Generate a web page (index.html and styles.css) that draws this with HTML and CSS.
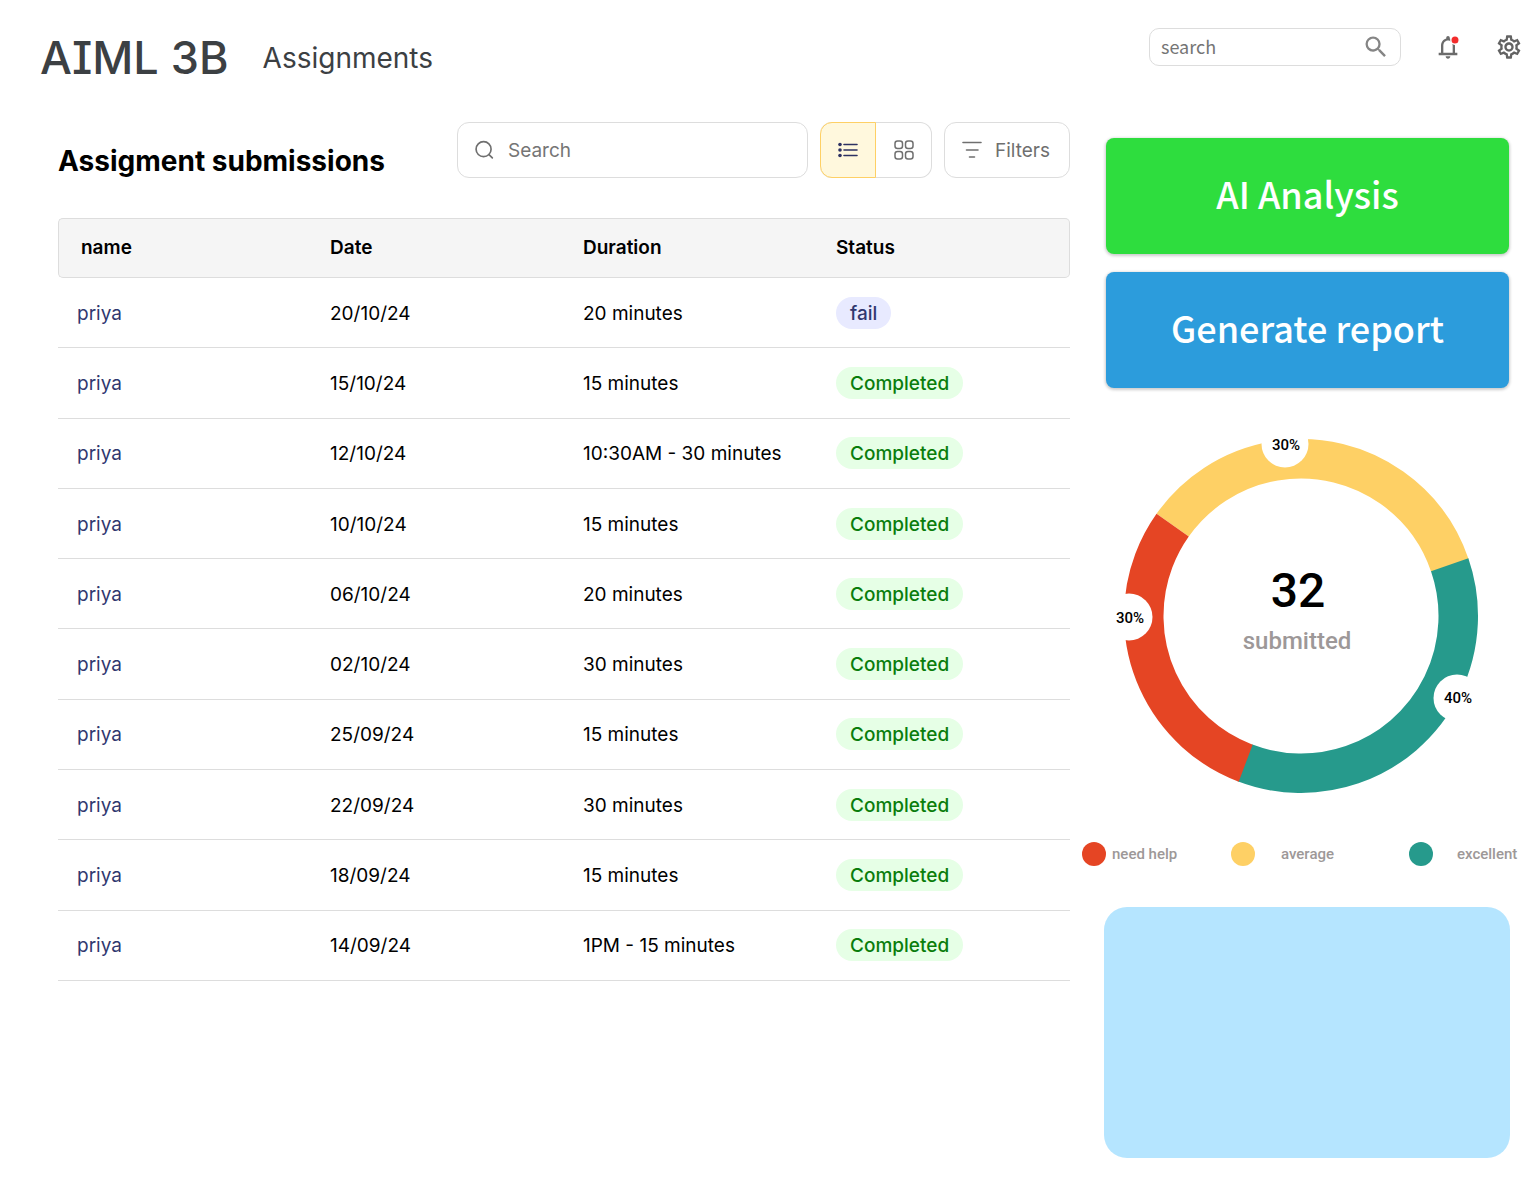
FILE: index.html
```html
<!DOCTYPE html>
<html lang="en">
<head>
<meta charset="utf-8">
<meta name="viewport" content="width=device-width, initial-scale=1">
<title>AIML 3B – Assignments</title>
<link rel="stylesheet" href="styles.css">
</head>
<body>
<header class="topbar">
  <h1 class="class-name">AIML 3B</h1>
  <p class="section-name">Assignments</p>
  <div class="top-actions">
    <label class="top-search">
      <input type="search" placeholder="search" aria-label="Search the site">
      <svg class="icon-lg" viewBox="0 0 24 24" fill="#858585" aria-hidden="true"><path d="M15.500 14h-.79l-.28-.27A6.471 6.471 0 0 0 16 9.500 6.500 6.500 0 1 0 9.500 16c1.610 0 3.090-.59 4.230-1.570l.27.28v.79l5 4.990L20.490 19l-4.990-5zm-6 0C7.010 14 5 11.990 5 9.500S7.010 5 9.500 5 14 7.010 14 9.500 11.990 14 9.500 14z"/></svg>
    </label>
    <button class="icon-button" type="button" aria-label="Notifications">
      <svg class="icon-lg" viewBox="0 0 24 24" aria-hidden="true"><path fill="#6b6b6b" d="M12 22c1.100 0 2-.9 2-2h-4c0 1.100.9 2 2 2zm6-5v-6c0-3.070-1.630-5.640-4.500-6.320V4c0-.83-.67-1.500-1.500-1.500s-1.500.67-1.500 1.500v.68C7.640 5.360 6 7.920 6 11v6H4v2h16v-2h-2zm-2 0H8v-6c0-2.480 1.510-4.500 4-4.500s4 2.020 4 4.500v6z"/><circle cx="18" cy="6" r="3.600" fill="#f32c2c" stroke="#fff" stroke-width="1.200"/></svg>
    </button>
    <button class="icon-button" type="button" aria-label="Settings">
      <svg class="icon-lg" viewBox="0 0 24 24" fill="#636363" aria-hidden="true"><path d="M19.430 12.980c.04-.32.07-.64.07-.98 0-.34-.03-.66-.07-.98l2.110-1.650c.19-.15.24-.42.12-.64l-2-3.460c-.09-.16-.26-.25-.44-.25-.06 0-.12.010-.17.030l-2.490 1c-.52-.4-1.080-.73-1.690-.98l-.38-2.650C14.460 2.180 14.250 2 14 2h-4c-.25 0-.46.18-.49.42l-.38 2.650c-.61.25-1.170.59-1.690.98l-2.490-1c-.06-.02-.12-.03-.18-.03-.17 0-.34.09-.43.25l-2 3.460c-.13.22-.07.49.12.64l2.110 1.650c-.04.32-.07.65-.07.98 0 .33.030.66.070.98l-2.110 1.650c-.19.15-.24.42-.12.64l2 3.460c.09.16.26.25.44.25.06 0 .12-.01.17-.03l2.490-1c.52.4 1.080.73 1.690.98l.38 2.650c.03.24.24.42.49.42h4c.25 0 .46-.18.49-.42l.38-2.650c.61-.25 1.170-.59 1.690-.98l2.490 1c.06.020.12.030.18.030.17 0 .34-.09.43-.25l2-3.460c.12-.22.07-.49-.12-.64l-2.110-1.650zm-1.980-1.710c.04.31.05.52.05.73 0 .21-.02.43-.05.73l-.14 1.130.89.7 1.080.84-.7 1.210-1.270-.51-1.040-.42-.9.68c-.43.32-.84.56-1.250.73l-1.060.43-.16 1.130-.2 1.350h-1.400l-.19-1.350-.16-1.130-1.060-.43c-.43-.18-.83-.41-1.230-.71l-.91-.7-1.060.43-1.270.51-.7-1.210 1.080-.84.89-.7-.14-1.130c-.03-.31-.05-.54-.05-.74s.02-.43.05-.73l.14-1.130-.89-.7-1.080-.84.7-1.210 1.270.51 1.040.42.9-.68c.43-.32.84-.56 1.250-.73l1.060-.43.16-1.130.2-1.350h1.390l.19 1.350.16 1.130 1.060.43c.43.18.83.41 1.230.71l.91.7 1.060-.43 1.270-.51.7 1.210-1.070.85-.89.7.14 1.130zM12 8c-2.210 0-4 1.790-4 4s1.790 4 4 4 4-1.790 4-4-1.790-4-4-4zm0 6c-1.100 0-2-.9-2-2s.9-2 2-2 2 .9 2 2-.9 2-2 2z"/></svg>
    </button>
  </div>
</header>

<main class="layout">
  <section class="submissions">
    <div class="toolbar">
      <h2 class="toolbar-title">Assigment submissions</h2>
      <label class="table-search">
        <svg class="icon" viewBox="0 0 24 24" fill="none" stroke="#6f6f6f" stroke-width="2" stroke-linecap="round" aria-hidden="true"><circle cx="11.500" cy="11" r="9"/><path d="M18 17.500l4 4"/></svg>
        <input type="search" placeholder="Search" aria-label="Search submissions">
      </label>
      <div class="view-toggle">
        <button class="view-button is-active" type="button" aria-label="List view" aria-pressed="true">
          <svg class="icon" viewBox="0 0 20 20" fill="none" stroke="#2d3162" stroke-width="1.600" stroke-linecap="round" aria-hidden="true"><path d="M6 4.500h13M6 10h13M6 15.500h13"/><g fill="#2d3162" stroke="none"><circle cx="2" cy="4.500" r="1.800"/><circle cx="2" cy="10" r="1.800"/><circle cx="2" cy="15.500" r="1.800"/></g></svg>
        </button>
        <button class="view-button" type="button" aria-label="Grid view" aria-pressed="false">
          <svg class="icon" viewBox="0 0 20 20" fill="none" stroke="#6f6f6f" stroke-width="1.500" aria-hidden="true"><rect x="1" y="1" width="7.500" height="7.500" rx="2.500"/><rect x="11.500" y="1" width="7.500" height="7.500" rx="2.500"/><rect x="1" y="11.500" width="7.500" height="7.500" rx="2.500"/><rect x="11.500" y="11.500" width="7.500" height="7.500" rx="2.500"/></svg>
        </button>
      </div>
      <button class="filter-button" type="button">
        <svg class="icon" viewBox="0 0 20 20" fill="none" stroke="#6f6f6f" stroke-width="1.600" stroke-linecap="round" aria-hidden="true"><path d="M1 2.500h18M4.500 10h11.500M7.500 17h5"/></svg>
        <span>Filters</span>
      </button>
    </div>

    <table class="submission-table">
      <thead>
        <tr><th scope="col">name</th><th scope="col">Date</th><th scope="col">Duration</th><th scope="col">Status</th></tr>
      </thead>
      <tbody>
        <tr><td><a href="#">priya</a></td><td>20/10/24</td><td>20 minutes</td><td><span class="status status-fail">fail</span></td></tr>
        <tr><td><a href="#">priya</a></td><td>15/10/24</td><td>15 minutes</td><td><span class="status">Completed</span></td></tr>
        <tr><td><a href="#">priya</a></td><td>12/10/24</td><td>10:30AM - 30 minutes</td><td><span class="status">Completed</span></td></tr>
        <tr><td><a href="#">priya</a></td><td>10/10/24</td><td>15 minutes</td><td><span class="status">Completed</span></td></tr>
        <tr><td><a href="#">priya</a></td><td>06/10/24</td><td>20 minutes</td><td><span class="status">Completed</span></td></tr>
        <tr><td><a href="#">priya</a></td><td>02/10/24</td><td>30 minutes</td><td><span class="status">Completed</span></td></tr>
        <tr><td><a href="#">priya</a></td><td>25/09/24</td><td>15 minutes</td><td><span class="status">Completed</span></td></tr>
        <tr><td><a href="#">priya</a></td><td>22/09/24</td><td>30 minutes</td><td><span class="status">Completed</span></td></tr>
        <tr><td><a href="#">priya</a></td><td>18/09/24</td><td>15 minutes</td><td><span class="status">Completed</span></td></tr>
        <tr><td><a href="#">priya</a></td><td>14/09/24</td><td>1PM - 15 minutes</td><td><span class="status">Completed</span></td></tr>
      </tbody>
    </table>
  </section>

  <aside class="sidebar">
    <div class="actions">
      <button class="action action-analysis" type="button">AI Analysis</button>
      <button class="action action-report" type="button">Generate report</button>
    </div>

    <svg class="donut" viewBox="0 0 436 372" role="img" aria-label="32 submitted: 30% need help, 30% average, 40% excellent">
      <g fill="none" stroke-width="39.500">
        <circle cx="219" cy="184" r="157.250" pathLength="360" stroke="#fed065" stroke-dasharray="126 234" transform="rotate(-144.700 219 184)"/>
        <circle cx="219" cy="184" r="157.250" pathLength="360" stroke="#269a8c" stroke-dasharray="130 230" transform="rotate(-19 219 184)"/>
        <circle cx="219" cy="184" r="157.250" pathLength="360" stroke="#e54524" stroke-dasharray="104.700 255.300" transform="rotate(110.600 219 184)"/>
      </g>
      <g fill="#fff">
        <circle cx="203" cy="12" r="23.500"/>
        <circle cx="47" cy="185" r="23.500"/>
        <circle cx="375" cy="266" r="23.500"/>
      </g>
      <g class="donut-share">
        <text x="204" y="18">30%</text>
        <text x="48" y="191">30%</text>
        <text x="376" y="271">40%</text>
      </g>
      <text class="donut-total" x="216" y="175">32</text>
      <text class="donut-caption" x="215" y="217">submitted</text>
    </svg>

    <ul class="legend">
      <li class="legend-help">need help</li>
      <li class="legend-average">average</li>
      <li class="legend-excellent">excellent</li>
    </ul>

    <div class="panel"></div>
  </aside>
</main>
</body>
</html>
```

FILE: styles.css
```css
*,
*::before,
*::after {
  box-sizing: border-box;
}

body {
  margin: 0;
  background: #fff;
  color: #000;
  font-family: Inter, "Liberation Sans", sans-serif;
  font-size: 19px;
  line-height: 24px;
}

h1,
h2,
p,
ul {
  margin: 0;
  padding: 0;
}

button,
input {
  font: inherit;
  color: inherit;
}

button {
  padding: 0;
  border: 0;
  background: none;
  cursor: pointer;
}

svg {
  display: block;
  flex: none;
}

.icon {
  width: 20px;
  height: 20px;
}

.icon-lg {
  width: 28px;
  height: 28px;
}

/* Top bar */
.topbar {
  display: flex;
  align-items: flex-start;
  gap: 34px;
  height: 92px;
  padding: 28px 11px 0 40px;
  color: #3c4043;
  line-height: 60px;
}

.class-name {
  font-size: 45px;
  font-weight: 500;
  font-feature-settings: "cv08";
}

.section-name {
  font-size: 28px;
}

.top-actions {
  display: flex;
  align-items: center;
  gap: 33px;
  margin-left: auto;
  line-height: 24px;
}

.top-search {
  display: flex;
  align-items: center;
  width: 252px;
  height: 38px;
  padding: 0 10px 0 11px;
  border: 1px solid #ddd;
  border-radius: 10px;
  font-family: "Noto Sans CJK SC", "Noto Sans", sans-serif;
  font-size: 18px;
}

.top-search input,
.table-search input {
  flex: 1;
  min-width: 0;
  padding: 0;
  border: 0;
  outline: 0;
  background: none;
}

.top-search input {
  padding-bottom: 3px;
}

.table-search input,
.filter-button span {
  padding-top: 2px;
}

input::placeholder {
  color: #757575;
  opacity: 1;
}

/* Page columns */
.layout {
  display: grid;
  grid-template-columns: minmax(0, 1fr) 436px;
  gap: 12px;
  padding: 30px 16px 41px 58px;
}

/* Toolbar */
.toolbar {
  display: flex;
  gap: 12px;
  height: 56px;
  margin-bottom: 40px;
  color: #6f6f6f;
}

.toolbar-title {
  flex: 1;
  padding-top: 22px;
  color: #000;
  font-size: 28px;
  font-weight: 700;
  line-height: 34px;
  white-space: nowrap;
}

.table-search,
.filter-button,
.view-toggle {
  border: 1px solid #ddd;
  border-radius: 12px;
}

.table-search {
  display: flex;
  align-items: center;
  gap: 14px;
  width: 351px;
  padding: 0 16px;
}

.view-toggle {
  display: flex;
  width: 112px;
  border-left: 0;
}

.view-button {
  display: grid;
  flex: 1;
  place-items: center;
}

.view-button.is-active {
  flex: 0 0 56px;
  margin: -1px 0;
  border: 1px solid #fed065;
  border-radius: 12px 0 0 12px;
  background: #fff8dd;
}

.filter-button {
  display: flex;
  align-items: center;
  gap: 13px;
  width: 126px;
  padding-left: 17px;
}

/* Submissions table */
.submission-table {
  width: 100%;
  height: 763px;
  border-spacing: 0;
  table-layout: fixed;
}

.submission-table th,
.submission-table td {
  padding: 0 0 0 19px;
  text-align: left;
  border-bottom: 1px solid #ddd;
}

.submission-table td:not(:last-child) {
  padding-top: 2px;
}

.submission-table th {
  height: 60px;
  border-top: 1px solid #ddd;
  background: #f5f5f5;
  font-weight: 600;
}

.submission-table th:first-child {
  padding-left: 22px;
  border-left: 1px solid #ddd;
  border-radius: 5px 0 0 5px;
}

.submission-table th:last-child {
  border-right: 1px solid #ddd;
  border-radius: 0 5px 5px 0;
}

.submission-table a {
  color: #30386f;
  text-decoration: none;
}

.status {
  display: inline-block;
  padding: 5px 14px 3px;
  border-radius: 16px;
  background: #e6ffe6;
  color: #0a7d0c;
  font-weight: 500;
  vertical-align: middle;
}

.status-fail {
  background: #e8eaff;
  color: #30386f;
}

/* Sidebar */
.actions {
  display: grid;
  gap: 18px;
  padding: 16px 9px 0 24px;
}

.action {
  height: 116px;
  padding-bottom: 7px;
  border-radius: 8px;
  box-shadow: 0 1px 3px 1px rgb(0 0 0 / 20%);
  color: #fff;
  font-family: "Noto Sans CJK SC", "Noto Sans", sans-serif;
  font-size: 36px;
  font-weight: 500;
  line-height: 48px;
}

.action-analysis {
  background: #2edd3e;
}

.action-report {
  background: #2c9cdc;
}

.donut {
  width: 100%;
  margin-top: 44px;
  font-family: Roboto, "Liberation Sans", sans-serif;
  font-weight: 500;
  text-anchor: middle;
}

.donut-share {
  font-size: 15px;
}

.donut-total {
  font-size: 48px;
}

.donut-caption {
  fill: #9d9898;
  font-size: 24px;
}

.legend {
  display: grid;
  grid-template-columns: 149fr 178fr 109fr;
  margin-top: 38px;
  color: #9d9898;
  font-family: Roboto, "Liberation Sans", sans-serif;
  font-size: 15px;
  font-weight: 500;
  list-style: none;
  white-space: nowrap;
}

.legend li {
  display: flex;
  gap: 24px;
}

.legend li::before {
  content: "";
  width: 24px;
  height: 24px;
  border-radius: 50%;
  background: #269a8c;
}

.legend .legend-help {
  gap: 6px;
}

.legend .legend-help::before {
  background: #e54524;
}

.legend .legend-average {
  gap: 26px;
}

.legend .legend-average::before {
  background: #fed065;
}

.panel {
  min-height: 251px;
  margin: 41px 8px 0 22px;
  border-radius: 23px;
  background: #b5e5ff;
}
```
